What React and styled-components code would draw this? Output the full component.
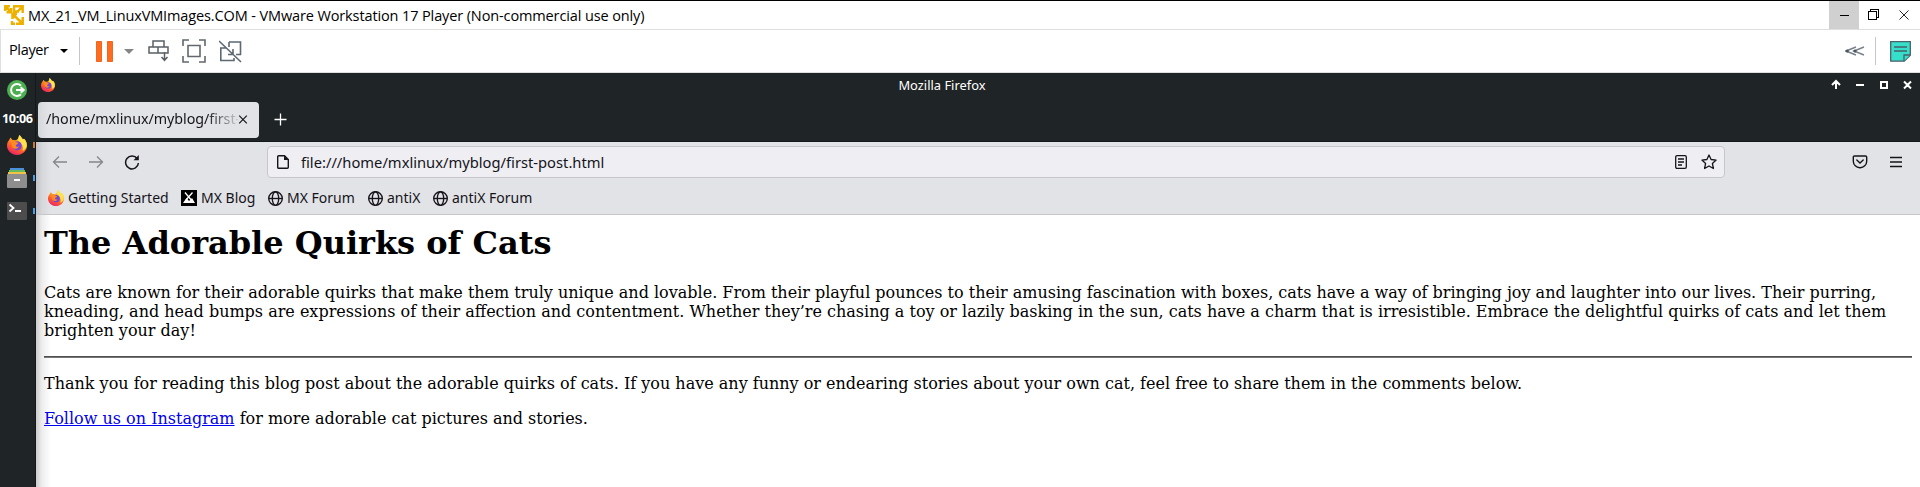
import React, { useId } from "react";
import styled, { createGlobalStyle } from "styled-components";

const Global = createGlobalStyle`
  *, *::before, *::after { box-sizing: border-box; }
  body { margin: 0; background: #fff; overflow: hidden; }
  svg { display: block; flex: none; }
`;

const Screen = styled.div`
  width: 1920px;
  height: 487px;
  display: flex;
  flex-direction: column;
  overflow: hidden;
  border-top: 1px solid #000;
  background: #fff;
`;

const HostTitle = styled.header`
  height: 29px;
  flex: none;
  display: flex;
  align-items: center;
  padding-left: 4px;
  border-bottom: 1px solid #dfdfdf;
`;

const HostTitleText = styled.span`
  flex: 1;
  margin-left: 4px;
  padding-top: 1px;
  font: 14.5px/20px "Open Sans", sans-serif;
  letter-spacing: ${(p) => p.$tracking};
  color: #000;
  white-space: nowrap;
`;

const HostButton = styled.div`
  width: 30px;
  height: 28px;
  display: flex;
  align-items: center;
  justify-content: center;
  background: ${(p) => (p.$active ? "#d0d0d0" : "transparent")};
`;

const HostButtons = styled.div`
  display: flex;
  padding-right: 1px;
  margin-left: -1px;
`;

const HostToolbar = styled.div`
  height: 43px;
  flex: none;
  display: flex;
  align-items: center;
  padding: 0 9px 0 9px;
  border-left: 1px solid #dfdfdf;
  border-bottom: 1px solid #e0e0e0;
`;

const PlayerMenu = styled.div`
  width: 70px;
  display: flex;
  align-items: center;
  font: 14.5px/20px "Open Sans", sans-serif;
  letter-spacing: -0.35px;
  padding-bottom: 3px;
  margin-left: -1px;
`;

const Caret = styled.i`
  width: 0;
  height: 0;
  margin: ${(p) => p.$margin};
  border: ${(p) => p.$size}px solid transparent;
  border-top-color: ${(p) => p.$color};
  border-bottom: 0;
`;

const Divider = styled.i`
  width: 1px;
  height: 28px;
  background: #c6c6c6;
`;

const ToolIcons = styled.div`
  display: flex;
  align-items: center;
  flex: 1;
  padding-left: 16px;
`;

const Gap = styled.i`
  width: ${(p) => p.$w}px;
  flex: none;
`;

const Guest = styled.div`
  flex: 1;
  display: flex;
  min-height: 0;
`;

const Dock = styled.nav`
  width: 36px;
  flex: none;
  display: flex;
  flex-direction: column;
  background: #1f2426;
  border-right: 1px solid #14181a;
`;

const DockItem = styled.div`
  height: ${(p) => p.$h}px;
  display: flex;
  align-items: center;
  padding-left: 7px;
`;

const Clock = styled.div`
  height: 21px;
  font: bold 12.6px/21px "Noto Sans", sans-serif;
  color: #fff;
  padding: 1px 0 0 2px;
  letter-spacing: -0.35px;
`;

const Marker = styled.i`
  width: 2px;
  height: 6px;
  margin-left: 6px;
  background: ${(p) => p.$color};
`;

const Browser = styled.main`
  flex: 1;
  display: flex;
  flex-direction: column;
  min-width: 0;
`;

const WindowTitle = styled.div`
  height: 25px;
  flex: none;
  display: flex;
  align-items: center;
  background: #1f2426;
  color: #fff;
  padding: 0 8px 2px 5px;
  font: 12.9px/20px "Noto Sans", sans-serif;
`;

const WindowName = styled.span`
  flex: 1;
  text-align: center;
  padding-right: 1px;
`;

const WindowControls = styled.div`
  display: flex;
  justify-content: flex-end;
`;

const TabStrip = styled.div`
  height: 44px;
  flex: none;
  display: flex;
  align-items: center;
  padding: 0 0 0 2px;
  background: #1f2426;
  border-bottom: 1px solid #14181a;
`;

const Tab = styled.div`
  width: 221px;
  height: 36px;
  border-radius: 4px;
  background: linear-gradient(to right, #d6d7db, #e2e3e7 10px);
  display: flex;
  align-items: center;
  padding: 0 11px 0 8px;
`;

const TabLabel = styled.span`
  width: 192px;
  flex: none;
  white-space: nowrap;
  color: #15141a;
  font: 14.3px/24px "Noto Sans", sans-serif;
  letter-spacing: -0.05px;
  padding-bottom: 1px;
  mask-image: linear-gradient(to right, #000 160px, transparent 196px);
`;

const Chrome = styled.div`
  flex: 1;
  display: flex;
  flex-direction: column;
  background: linear-gradient(to right, rgba(0, 0, 0, 0.2), rgba(0, 0, 0, 0.07) 6px, transparent 15px), #fff;
`;

const BrowserBars = styled.div`
  height: 73px;
  flex: none;
  border-bottom: 1px solid #c6c6cb;
  background: linear-gradient(to right, rgba(0, 0, 0, 0.14), rgba(0, 0, 0, 0.05) 6px, transparent 15px), #e2e3e7;
`;

const NavBar = styled.div`
  height: 40px;
  display: flex;
  align-items: center;
  padding: 0 18px 0 16px;
`;

const NavButtons = styled.div`
  width: 215px;
  display: flex;
  align-items: center;
  gap: 20px;
`;

const AddressBar = styled.div`
  width: 1458px;
  height: 32px;
  display: flex;
  align-items: center;
  padding: 0 7px 0 8px;
  background: #eeeef3;
  border: 1px solid #c6c6cb;
  border-radius: 4px;
`;

const Address = styled.span`
  flex: 1;
  margin-left: 9px;
  color: #15141a;
  font: 14.72px/24px "Noto Sans", sans-serif;
`;

const NavRight = styled.div`
  flex: 1;
  display: flex;
  justify-content: flex-end;
  gap: 22px;
`;

const Bookmarks = styled.div`
  height: 32px;
  display: flex;
  align-items: center;
  padding-left: 12px;
`;

const Bookmark = styled.div`
  width: ${(p) => p.$w}px;
  display: flex;
  align-items: center;
  gap: ${(p) => p.$gap || 4}px;
  white-space: nowrap;
  color: #15141a;
  font: 14px/20px "Noto Sans", sans-serif;
`;

const Article = styled.article`
  padding: 9px 8px 8px;
  color: #000;
  font: 16px/19px "DejaVu Serif", serif;

  h1 {
    margin: 0 0 21px;
    font-size: 32px;
    line-height: 38px;
  }
  p { margin: 16px 0; }
  hr {
    height: 2px;
    margin: 16px 0;
    border: 0;
    border-top: 1px solid #505050;
    background: #77777a;
  }
  a { color: #0000ee; }
`;

function FirefoxLogo({ size }) {
  const id = useId().replace(/[^a-zA-Z0-9]/g, "");
  return (
    <svg width={size} height={size} viewBox="0 0 20 20">
      <defs>
        <linearGradient id={id} x1=".8" y1="0" x2=".3" y2="1">
          <stop offset="0" stopColor="#fff14a" />
          <stop offset=".4" stopColor="#ff9a22" />
          <stop offset=".7" stopColor="#ff5631" />
          <stop offset="1" stopColor="#e9216b" />
        </linearGradient>
      </defs>
      <path fill={`url(#${id})`} d="M3.5 2.5 5.5 5 9 5.3 11 3.8 12.5 0C14 2 15.2 3.2 15.8 4.5L17 3.8C19 5.8 20 8 20 10.6 20 16 15.4 20 10 20S0 16 0 10.6C0 7.6 1 6.5 2 5.2Z" />
      <path fill="#ffe14a" d="M12.5 0C14 2 15.2 3.2 15.8 4.5L17 3.8C19 6 20 8 19.6 11.5 18.8 14 17 15 15.3 15.8 17 12.5 15.5 9 12.5 7.5 10.8 6.2 11 2.5 12.5 0Z" />
      <circle cx="10.2" cy="10.8" r="4.6" fill="#7646d8" />
      <path fill="#ff8a20" d="M4 6.5C6 5 8.7 5.7 9.8 7.3L11.3 8C11 9.2 9.3 9.3 8.8 10.3 8.8 11.7 10.4 12.4 12 11.6 11 14 7.5 14.7 5.3 12.3Z" />
    </svg>
  );
}

function VmwareLogo() {
  return (
    <svg width="20" height="20" viewBox="0 0 20 20" fill="none" stroke="#edb200" strokeWidth="2.5">
      <path d="M6 1.3H1.2V6M1.2 1.3l5.3 5.2M2.5 7.3H7V3M9 1.3h9.7V8M18.7 1.3l-5 5M10 2.5v4h5M18.7 12v6.7H12M9 9.5l9.5 9M8.5 14V9H13M8 16v2.7h3" />
    </svg>
  );
}

const Globe = () => (
  <svg width="15" height="15" viewBox="0 0 15 15" fill="none" stroke="#15141a" strokeWidth="1.35">
    <circle cx="7.5" cy="7.5" r="6.8" />
    <ellipse cx="7.5" cy="7.5" rx="3.2" ry="6.8" />
    <path d="M.7 7.5h13.6" />
  </svg>
);

const PauseIcon = () => (
  <svg width="17" height="21" viewBox="0 0 17 21" fill="#ff6b1f" stroke="#ee6820">
    <path d="M.5.5h5v20h-5zM11.5.5h5v20h-5z" />
  </svg>
);

const SendKeysIcon = () => (
  <svg width="22" height="22" viewBox="0 0 22 22" fill="none" stroke="#5a6066" strokeWidth="1.5">
    <path d="M5 7V1h11v6M1 7h9v6H1zM10 7h10v6H10zM16.5 12v8M13.5 17l3 3.3 3-3.3" />
  </svg>
);

const FullscreenIcon = () => (
  <svg width="24" height="24" viewBox="0 0 24 24" fill="none" stroke="#62686e" strokeWidth="1.6">
    <path d="M1 7V1h6M17 1h6v6M23 17v6h-6M7 23H1v-6M6 6.5h12v11H6z" />
  </svg>
);

const UnityIcon = () => (
  <svg width="23" height="23" viewBox="0 0 23 23" fill="none" stroke="#5c6872" strokeWidth="1.6">
    <path d="M10 2h11.5v12.500H17M7 8H1.800v12.500H15V18M10 7V2M14 9v5.500H9M0 1l22 21" />
  </svg>
);

const CollapseIcon = () => (
  <svg width="20" height="10" viewBox="0 0 20 10" fill="none" stroke="#77828b" strokeWidth="1.5">
    <path d="M11 1 1 5l10 4M19 1 9 5l10 4" />
    <circle cx="2.2" cy="5" r="1.6" fill="#4a555d" stroke="none" />
    <circle cx="10" cy="5" r="1.6" fill="#4a555d" stroke="none" />
  </svg>
);

const NoteIcon = () => (
  <svg width="21" height="21" viewBox="0 0 21 21" stroke="#4a626b" strokeWidth="1.3">
    <path fill="#36dfc9" d="M.7.7h19.6v13.5l-6 6H.7z" />
    <path fill="#36dfc9" d="M14 20v-6h6M4 6h13M4 10h13" />
  </svg>
);

export default function App() {
  return (
    <>
      <Global />
      <Screen>
        <HostTitle>
          <VmwareLogo />
          <HostTitleText $tracking="-0.12px">MX_21_VM_LinuxVMImages.COM - VMware Workstation 17 Player (Non-commercial use only)</HostTitleText>
          <HostButtons>
            <HostButton $active>
              <svg width="9" height="9" shapeRendering="crispEdges"><path d="M0 4.5h9" stroke="#000" /></svg>
            </HostButton>
            <HostButton>
              <svg width="12" height="12" viewBox="0 0 12 12" fill="none" stroke="#000" shapeRendering="crispEdges">
                <path d="M.5 2.5h8v8h-8zM2.5 2V.5h8v8H9" />
              </svg>
            </HostButton>
            <HostButton>
              <svg width="10" height="10" stroke="#111" strokeWidth=".9"><path d="M.5.5l9 9M9.5.5l-9 9" /></svg>
            </HostButton>
          </HostButtons>
        </HostTitle>

        <HostToolbar>
          <PlayerMenu>
            Player
            <Caret $margin="3px 0 0 11px" $size={4.5} $color="#000" />
          </PlayerMenu>
          <Divider />
          <ToolIcons>
            <PauseIcon />
            <Gap $w={11} />
            <Caret $margin="0" $size={5} $color="#858585" />
            <Gap $w={14} />
            <SendKeysIcon />
            <Gap $w={12} />
            <FullscreenIcon />
            <Gap $w={13} />
            <UnityIcon />
          </ToolIcons>
          <CollapseIcon />
          <Gap $w={10} />
          <Divider />
          <Gap $w={14} />
          <NoteIcon />
        </HostToolbar>

        <Guest>
          <Dock>
            <DockItem $h={34}>
              <svg width="20" height="20" viewBox="0 0 20 20" fill="none" stroke="#fff" strokeWidth="2">
                <circle cx="10" cy="10" r="10" fill="#4caf50" stroke="none" />
                <path d="M14 5.7a5.9 5.9 0 1 0 0 8.6M9 10h7M13.7 7.2l3 2.8-3 2.8" />
              </svg>
            </DockItem>
            <Clock>10:06</Clock>
            <DockItem $h={33}>
              <FirefoxLogo size={20} />
              <Marker $color="#c77a35" />
            </DockItem>
            <DockItem $h={33}>
              <svg width="20" height="20" viewBox="0 0 20 20">
                <path fill="#4a8fd8" d="M3 0h14v2H3z" />
                <path fill="#66bb5a" d="M2 2h16v2H2z" />
                <path fill="#f2c14a" d="M1 4h18v3H1z" />
                <rect y="6" width="20" height="14" rx="1" fill="#8e8e8e" />
                <path fill="#fff" d="M7 11h6v2H7z" />
              </svg>
              <Marker $color="#46a0e6" />
            </DockItem>
            <DockItem $h={33}>
              <svg width="20" height="18" viewBox="0 0 20 18" fill="none" stroke="#fff" strokeWidth="1.8">
                <rect width="20" height="18" rx="1" fill="#4d4d4d" stroke="none" />
                <path d="m2.5 2.5 4 3.5-4 3.5M8 9h6" />
              </svg>
              <Marker $color="#46a0e6" />
            </DockItem>
          </Dock>

          <Browser>
            <WindowTitle>
              <FirefoxLogo size={14} />
              <WindowName>Mozilla Firefox</WindowName>
              <WindowControls>
                <svg width="82" height="12" viewBox="0 0 82 12" fill="none" stroke="#fff" strokeWidth="2">
                  <path d="M6 2v8M2 6l4-4 4 4M26 6h8M51 3h6v6h-6zM74 2.5l7 7M81 2.5l-7 7" />
                </svg>
              </WindowControls>
            </WindowTitle>
            <TabStrip>
              <Tab>
                <TabLabel>/home/mxlinux/myblog/first-</TabLabel>
                <svg width="10" height="9" viewBox="0 0 10 9" stroke="#15141a" strokeWidth="1.2"><path d="M1.2.7l7.6 7.6M8.8.7 1.2 8.3" /></svg>
              </Tab>
              <Gap $w={15} />
              <svg width="13" height="13" stroke="#fff" strokeWidth="1.3"><path d="M6.5.5v12M.5 6.5h12" /></svg>
            </TabStrip>

            <Chrome>
              <BrowserBars>
                <NavBar>
                  <NavButtons>
                    <svg width="16" height="14" fill="none" stroke="#85868b" strokeWidth="1.3"><path d="M15 7H1.5M7 1.5 1.5 7 7 12.5" /></svg>
                    <svg width="16" height="14" fill="none" stroke="#85868b" strokeWidth="1.3"><path d="M1 7h13.5M9 1.5 14.5 7 9 12.5" /></svg>
                    <svg width="16" height="16" viewBox="0 0 16 16" fill="none" stroke="#15141a" strokeWidth="1.5">
                      <path d="M13.2 4.7A6.4 6.4 0 1 0 14.4 9" />
                      <path d="M14.8 1v5.3H9.5z" fill="#15141a" stroke="none" />
                    </svg>
                  </NavButtons>
                  <AddressBar>
                    <svg width="14" height="16" viewBox="0 0 14 16" fill="none" stroke="#15141a" strokeWidth="1.4">
                      <path d="M2.7 1.7h5.8l3.8 3.8v7.8a1 1 0 0 1-1 1H2.7a1 1 0 0 1-1-1V2.7a1 1 0 0 1 1-1z" />
                      <path d="M8 1.5V6h4.5z" fill="#15141a" stroke="none" />
                    </svg>
                    <Gap $w={2} />
                    <Address>file:///home/mxlinux/myblog/first-post.html</Address>
                    <svg width="12" height="14" viewBox="0 0 12 14" fill="none" stroke="#15141a" strokeWidth="1.3">
                      <rect x=".7" y=".7" width="10.6" height="12.6" rx="1.3" />
                      <path d="M3 4h6M3 7h6M3 10h4" />
                    </svg>
                    <Gap $w={14} />
                    <svg width="16" height="16" viewBox="0 0 16 16" fill="none" stroke="#15141a" strokeWidth="1.3" strokeLinejoin="round">
                      <path d="m8 1 2.1 4.5 5 .6-3.7 3.4 1 5L8 12l-4.4 2.5 1-5L.9 6.1l5-.6z" />
                    </svg>
                  </AddressBar>
                  <NavRight>
                    <svg width="16" height="14" viewBox="0 0 16 14" fill="none" stroke="#15141a" strokeWidth="1.4" strokeLinecap="round">
                      <path d="M2.5 1h11c.7 0 1.2.5 1.2 1.2v4A6.5 6.5 0 0 1 8 12.7a6.5 6.5 0 0 1-6.7-6.5v-4C1.3 1.5 1.8 1 2.5 1zM4.8 5 8 8l3.2-3" />
                    </svg>
                    <svg width="12" height="14" stroke="#15141a" strokeWidth="1.3"><path d="M0 2.5h12M0 7h12M0 11.5h12" /></svg>
                  </NavRight>
                </NavBar>
                <Bookmarks>
                  <Bookmark $w={133}><FirefoxLogo size={16} />Getting Started</Bookmark>
                  <Bookmark $w={87}>
                    <svg width="16" height="16" viewBox="0 0 16 16">
                      <path fill="#000" d="M0 0h16v16H0z" />
                      <path fill="#fff" d="m2 13 3.5-5L8 11l3-3 3 5z" />
                      <path stroke="#fff" strokeWidth="1.3" d="m4 2.5 7.5 9M11.5 2.5 5 10" />
                    </svg>
                    MX Blog
                  </Bookmark>
                  <Bookmark $w={100}><Globe />MX Forum</Bookmark>
                  <Bookmark $w={65}><Globe />antiX</Bookmark>
                  <Bookmark $w={100}><Globe />antiX Forum</Bookmark>
                </Bookmarks>
              </BrowserBars>
              <Article>
                <h1>The Adorable Quirks of Cats</h1>
                <p>
                  Cats are known for their adorable quirks that make them truly unique and lovable. From their playful pounces to their amusing fascination with boxes, cats have a way of bringing joy and laughter into our lives. Their purring, kneading, and head bumps are expressions of their affection and contentment. Whether they’re chasing a toy or lazily basking in the sun, cats have a charm that is irresistible. Embrace the delightful quirks of cats and let them brighten your day!
                </p>
                <hr />
                <p>
                  Thank you for reading this blog post about the adorable quirks of cats. If you have any funny or endearing stories about your own cat, feel free to share them in the comments below.
                </p>
                <p><a href="#instagram">Follow us on Instagram</a> for more adorable cat pictures and stories.</p>
              </Article>
            </Chrome>
          </Browser>
        </Guest>
      </Screen>
    </>
  );
}
